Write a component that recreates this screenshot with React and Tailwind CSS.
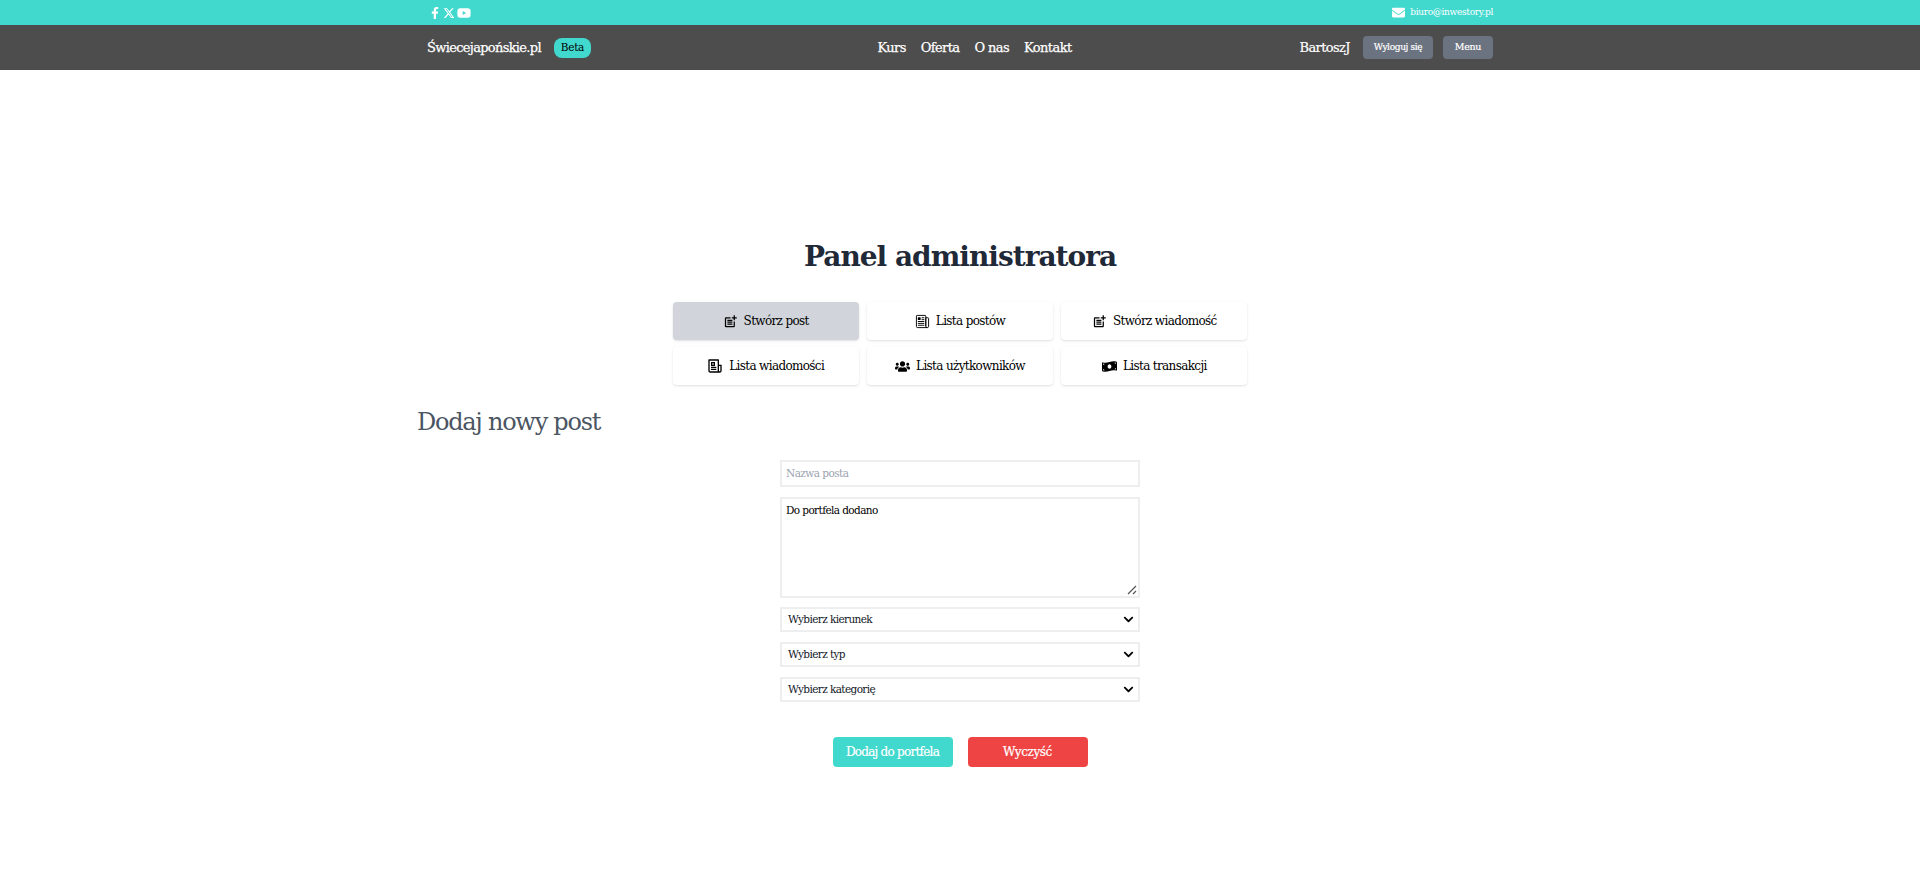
import React from "react";
import { FaFacebookF, FaYoutube, FaEnvelope, FaUsers, FaMoneyBillWave, FaChevronDown } from "react-icons/fa";
import { FaXTwitter } from "react-icons/fa6";
import { MdOutlinePostAdd } from "react-icons/md";
import { IoNewspaperOutline } from "react-icons/io5";
import { RiNewspaperLine } from "react-icons/ri";

const F = "font-['DejaVu_Serif','Liberation_Serif',serif]";

const tabs = [
  [MdOutlinePostAdd, "Stwórz post", "text-[15px]", true],
  [IoNewspaperOutline, "Lista postów", "text-[15px]"],
  [MdOutlinePostAdd, "Stwórz wiadomość", "text-[15px]"],
  [RiNewspaperLine, "Lista wiadomości", "text-[16px]"],
  [FaUsers, "Lista użytkowników", "text-[15px]"],
  [FaMoneyBillWave, "Lista transakcji", "text-[15px]"],
];

function Sel({ children }) {
  return (
    <div className="h-[25px] border-2 border-[#edeef0] flex items-center justify-between pl-[6px] pr-[4px] text-[10.5px] tracking-[-0.6px] text-[#111827]">
      <span>{children}</span>
      <FaChevronDown className="text-[11px] text-black" />
    </div>
  );
}

export default function App() {
  return (
    <div className={`${F} min-h-[869px] bg-white`}>
      <div className="h-[25px] bg-[#41d8ce]">
        <div className="w-[1088px] mx-auto h-full flex items-center justify-between pl-[13px] pr-[11px] text-white">
          <div className="flex items-center gap-[2px]">
            <FaFacebookF className="text-[12px]" />
            <FaXTwitter className="text-[12px]" />
            <FaYoutube className="text-[14px]" />
          </div>
          <div className="flex items-center gap-[5px] text-[9px] tracking-[-0.3px]">
            <FaEnvelope className="text-[13px]" />
            <span>biuro@inwestory.pl</span>
          </div>
        </div>
      </div>
      <nav className="h-[45px] bg-[#4d4d4d] text-white">
        <div className="w-[1088px] mx-auto h-full grid grid-cols-3 items-center pl-[11px] pr-[11px]">
          <div className="flex items-center gap-[13px]">
            <span className="text-[13px] tracking-[-0.68px] [-webkit-text-stroke:0.25px_white]">Świecejapońskie.pl</span>
            <span className="h-[20px] w-[37px] rounded-lg bg-[#41d8ce] text-black text-[10.5px] tracking-[-0.3px] flex items-center justify-center">Beta</span>
          </div>
          <div className="flex justify-center gap-[15px] text-[13px] tracking-[-0.6px] pl-[29px] [-webkit-text-stroke:0.25px_white]">
            <span>Kurs</span><span>Oferta</span><span>O nas</span><span>Kontakt</span>
          </div>
          <div className="flex items-center justify-end">
            <span className="text-[13px] tracking-[-0.6px] mr-[13px] [-webkit-text-stroke:0.2px_white]">BartoszJ</span>
            <button className="h-[23px] w-[70px] rounded bg-[#6b7280] text-[9px] tracking-[-0.35px] [-webkit-text-stroke:0.2px_white] mr-[10px]">Wyloguj się</button>
            <button className="h-[23px] w-[50px] rounded bg-[#6b7280] text-[9.5px] tracking-[-0.3px] [-webkit-text-stroke:0.2px_white]">Menu</button>
          </div>
        </div>
      </nav>
      <main className="w-[1088px] mx-auto pt-[165px]">
        <h1 className="text-[28px] leading-[44px] tracking-[-1px] font-bold text-[#1f2937] text-center">Panel administratora</h1>
        <div className="w-[575px] mx-auto mt-[23px] grid grid-cols-3 gap-x-[8px] gap-y-[7px]">
          {tabs.map(([I, t, s, a]) => (
            <button key={t} className={`h-[38px] rounded flex items-center justify-center gap-[6px] text-[12px] tracking-[-0.65px] text-black shadow ${a ? "bg-[#d1d5db]" : "bg-white"}`}>
              <I className={s} />
              <span>{t}</span>
            </button>
          ))}
        </div>
        <h2 className="mt-[21px] pl-[1px] text-[24px] leading-[32px] tracking-[-1.25px] text-[#4b5563]">Dodaj nowy post</h2>
        <form className="w-[360px] mx-auto mt-[22px] flex flex-col">
          <div className="h-[27px] border-2 border-[#edeef0] flex items-center px-[4px] text-[10.5px] tracking-[-0.55px] text-[#9ca3af]">Nazwa posta</div>
          <div className="relative mt-[10px] mb-[9px] h-[101px] border-2 border-[#edeef0] px-[4px] py-[4px] text-[10.5px] tracking-[-0.6px] text-black">
            Do portfela dodano
            <svg className="absolute right-[1px] bottom-[1px] w-[10px] h-[10px]" viewBox="0 0 10 10" stroke="#555" strokeWidth="1.2">
              <path d="M1 9 L9 1 M6 9 L9 6" />
            </svg>
          </div>
          <div className="flex flex-col gap-[10px]">
            <Sel>Wybierz kierunek</Sel>
            <Sel>Wybierz typ</Sel>
            <Sel>Wybierz kategorię</Sel>
          </div>
          <div className="mt-[35px] flex justify-center gap-[15px]">
            <button className="w-[120px] h-[30px] rounded bg-[#41d8ce] text-white text-[12px] tracking-[-0.75px] [-webkit-text-stroke:0.2px_white]">Dodaj do portfela</button>
            <button className="w-[120px] h-[30px] rounded bg-[#ef4444] text-white text-[12px] tracking-[-0.4px] [-webkit-text-stroke:0.2px_white]">Wyczyść</button>
          </div>
        </form>
      </main>
    </div>
  );
}
